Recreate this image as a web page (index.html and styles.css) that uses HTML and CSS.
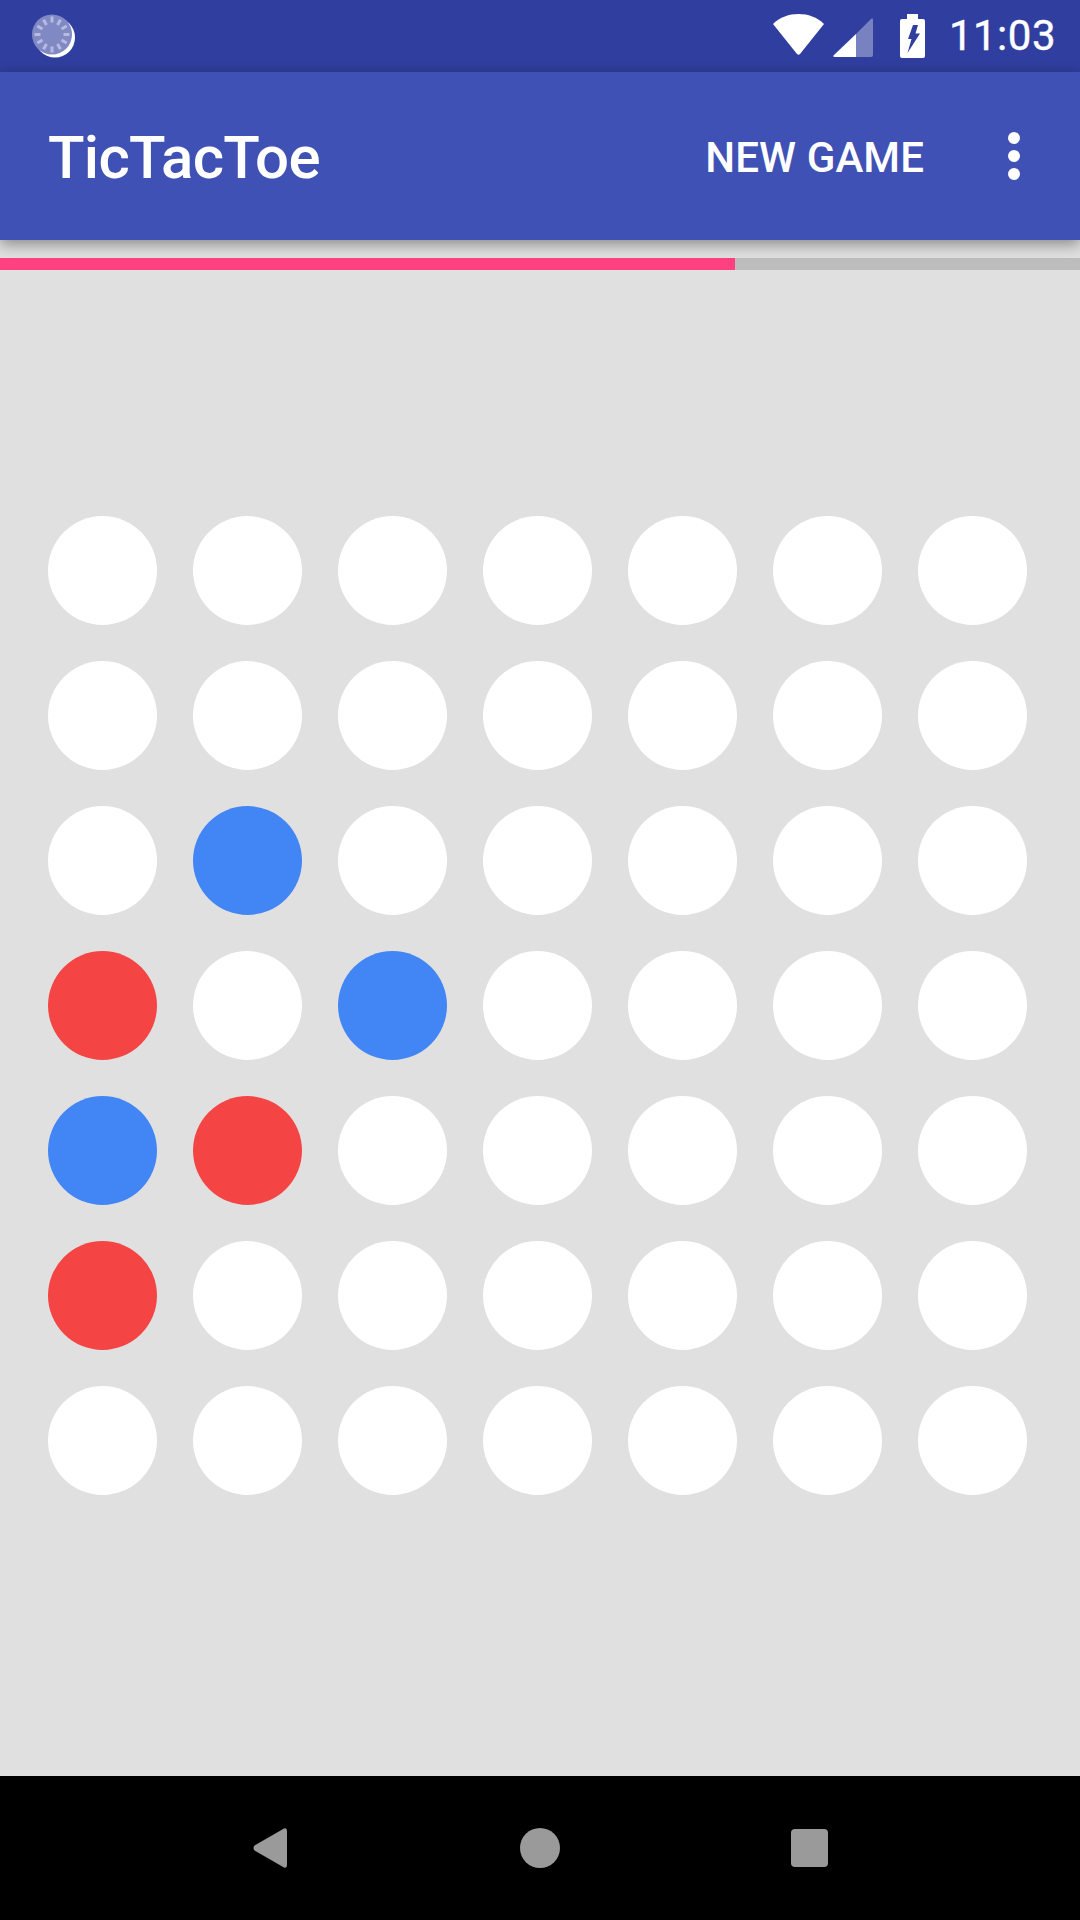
FILE: index.html
```html
<!DOCTYPE html>
<html lang="en">
<head>
    <meta charset="UTF-8">
    <title>TicTacToe</title>
    <link rel="stylesheet" href="styles.css">
</head>
<body>
    <div class="screen">
        <div class="status-bar">
            <svg class="spinner" width="44" height="44" viewBox="0 0 44 44">
                <circle class="crescent" cx="23" cy="23.500" r="20"/>
                <circle class="disc" cx="20" cy="20.500" r="20"/>
                <g class="ticks">
                    <path d="M20 2.500v6M20 32.500v6M2.500 20.500h6M31.500 20.500h6M11.500 5.800l3 5.200M25.500 30l3 5.200M5.300 12l5.200 3M29.500 26l5.200 3M28.500 5.800l-3 5.200M14.500 30l-3 5.200M34.700 12l-5.200 3M10.500 26l-5.200 3"/>
                </g>
            </svg>
            <div class="status-right">
                <svg class="wifi" width="51" height="41" viewBox="0 0 51 41">
                    <path d="M0 10 C7 3 16 0 25.500 0 C35 0 44 3 51 10 L27 40 Q25.500 41.500 24 40 Z"/>
                </svg>
                <svg class="signal" width="40" height="40" viewBox="0 0 40 40">
                    <path class="signal-empty" d="M23 17 L38 2 Q40 0 40 3 L40 38 Q40 40 38 40 L23 40 Z"/>
                    <path d="M23 17 L23 40 L2 40 Q-1 40 1 38 Z"/>
                </svg>
                <svg class="battery" width="25" height="44" viewBox="0 0 25 44">
                    <path fill-rule="evenodd" d="M7 0 H18 V5 H23 Q25 5 25 7 V42 Q25 44 23 44 H2 Q0 44 0 42 V7 Q0 5 2 5 H7 Z M13 11 H18 L15.500 19.500 H20 L7.500 39 L11.500 25 H8 Z"/>
                </svg>
                <span class="clock">11:03</span>
            </div>
        </div>

        <div class="app-bar">
            <span class="title">TicTacToe</span>
            <span class="action">NEW GAME</span>
            <div class="overflow">
                <span class="dot"></span>
                <span class="dot"></span>
                <span class="dot"></span>
            </div>
        </div>

        <div class="content">
            <div class="progress">
                <div class="progress-fill" style="width: 735px"></div>
            </div>
            <div class="board">
                <div class="cell"></div><div class="cell"></div><div class="cell"></div><div class="cell"></div><div class="cell"></div><div class="cell"></div><div class="cell"></div>
                <div class="cell"></div><div class="cell"></div><div class="cell"></div><div class="cell"></div><div class="cell"></div><div class="cell"></div><div class="cell"></div>
                <div class="cell"></div><div class="cell blue"></div><div class="cell"></div><div class="cell"></div><div class="cell"></div><div class="cell"></div><div class="cell"></div>
                <div class="cell red"></div><div class="cell"></div><div class="cell blue"></div><div class="cell"></div><div class="cell"></div><div class="cell"></div><div class="cell"></div>
                <div class="cell blue"></div><div class="cell red"></div><div class="cell"></div><div class="cell"></div><div class="cell"></div><div class="cell"></div><div class="cell"></div>
                <div class="cell red"></div><div class="cell"></div><div class="cell"></div><div class="cell"></div><div class="cell"></div><div class="cell"></div><div class="cell"></div>
                <div class="cell"></div><div class="cell"></div><div class="cell"></div><div class="cell"></div><div class="cell"></div><div class="cell"></div><div class="cell"></div>
            </div>
        </div>

        <div class="nav-bar">
            <svg class="nav-back" width="34" height="40" viewBox="0 0 34 40">
                <path d="M31 0.500 Q34 -0.500 34 3 L34 37 Q34 40.500 31 39.500 L1.500 22.500 Q-0.500 20 1.500 17.500 Z"/>
            </svg>
            <div class="nav-home"></div>
            <div class="nav-recent"></div>
        </div>
    </div>
</body>
</html>
```

FILE: styles.css
```css
* {
    box-sizing: border-box;
}
body {
    margin: 0;
    font-family: Roboto, "Liberation Sans", sans-serif;
    background-color: #e0e0e0;
}
.screen {
    width: 1080px;
    height: 1920px;
    display: flex;
    flex-direction: column;
    overflow: hidden;
}

/* status bar */
.status-bar {
    height: 72px;
    flex: none;
    display: flex;
    align-items: center;
    justify-content: space-between;
    padding: 0 24px 0 32px;
    background-color: #303f9f;
    color: #fff;
}
.spinner {
    display: block;
    filter: blur(0.6px);
}
.spinner .disc {
    fill: #8189c4;
}
.spinner .crescent {
    fill: #fff;
}
.spinner .ticks path {
    stroke: #b6bbdf;
    stroke-width: 3;
    fill: none;
}
.status-right {
    display: flex;
    align-items: center;
}
.status-right svg {
    display: block;
    fill: #fff;
}
.wifi {
    margin-right: 9px;
    margin-top: -3px;
}
.signal {
    margin-right: 27px;
    margin-top: 2px;
}
.signal .signal-empty {
    fill-opacity: 0.35;
}
.battery {
    margin-right: 24px;
}
.clock {
    font-size: 42px;
    line-height: 72px;
    letter-spacing: 0.5px;
    -webkit-text-stroke: 0.4px #fff;
}

/* app bar */
.app-bar {
    height: 168px;
    flex: none;
    position: relative;
    z-index: 1;
    display: flex;
    align-items: center;
    padding-left: 48px;
    background-color: #3f51b5;
    color: #fff;
    box-shadow: 0 4px 14px rgba(0, 0, 0, 0.4);
}
.title {
    font-size: 60px;
    font-weight: 500;
    letter-spacing: -0.7px;
    flex: 1;
    margin-top: 2px;
}
.action {
    font-size: 42px;
    font-weight: 500;
    letter-spacing: 0.1px;
    margin-right: 84px;
    margin-top: 2px;
}
.overflow {
    display: flex;
    flex-direction: column;
    gap: 6px;
    margin-right: 60px;
}
.dot {
    width: 12px;
    height: 12px;
    border-radius: 50%;
    background-color: #fff;
}

/* board */
.content {
    flex: 1;
    padding-top: 18px;
}
.progress {
    height: 12px;
    background-color: #bdbdbd;
}
.progress-fill {
    height: 100%;
    background-color: #ff4081;
}
.board {
    display: grid;
    grid-template-columns: repeat(7, 109px);
    grid-auto-rows: 109px;
    gap: 36px;
    margin-top: 246px;
    padding-left: 48px;
}
.cell {
    border-radius: 50%;
    background-color: #fff;
}
.cell.blue {
    background-color: #4285f4;
}
.cell.red {
    background-color: #f44444;
}

/* nav bar */
.nav-bar {
    height: 144px;
    flex: none;
    position: relative;
    display: flex;
    align-items: center;
    padding-left: 253px;
    background-color: #000;
}
.nav-back {
    display: block;
    fill: #9a9a9a;
    margin-right: 233px;
}
.nav-home {
    width: 40px;
    height: 40px;
    border-radius: 50%;
    background-color: #9a9a9a;
    margin-right: 231px;
}
.nav-recent {
    width: 37px;
    height: 38px;
    border-radius: 4px;
    background-color: #9a9a9a;
}
```
